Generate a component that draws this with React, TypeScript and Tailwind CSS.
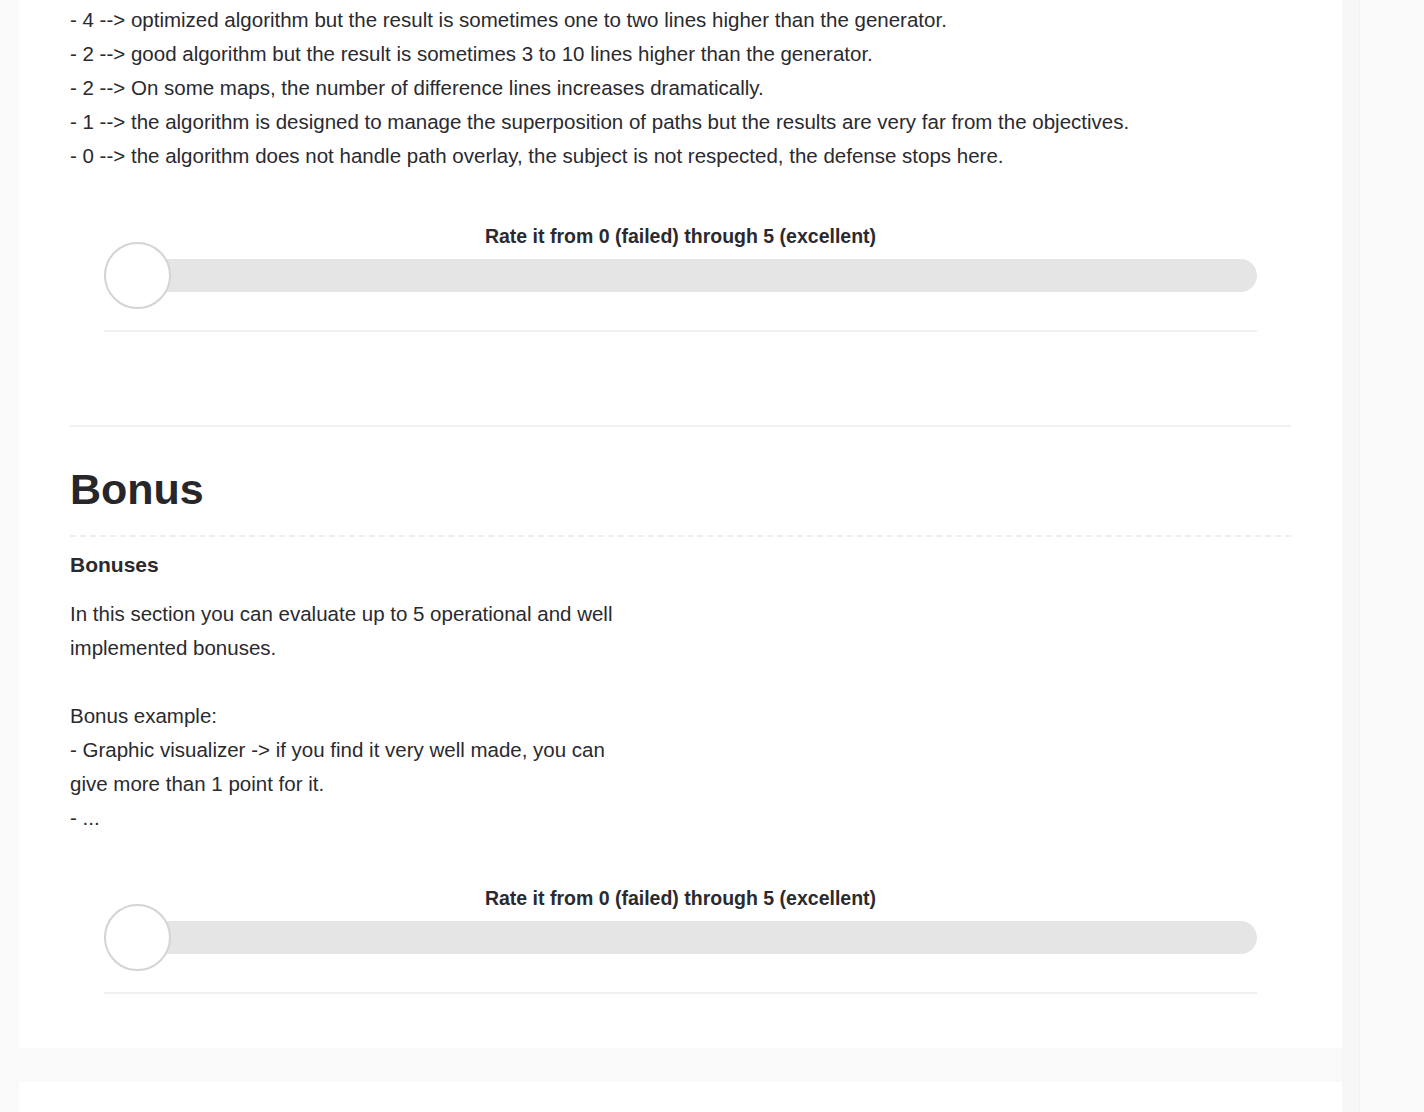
const scale = [
  '- 4 --> optimized algorithm but the result is sometimes one to two lines higher than the generator.',
  '- 2 --> good algorithm but the result is sometimes 3 to 10 lines higher than the generator.',
  '- 2 --> On some maps, the number of difference lines increases dramatically.',
  '- 1 --> the algorithm is designed to manage the superposition of paths but the results are very far from the objectives.',
  '- 0 --> the algorithm does not handle path overlay, the subject is not respected, the defense stops here.',
];

function Rating() {
  return (
    <div className="mx-[34px] pt-[53px]">
      <p className="text-center text-[19.5px] font-bold leading-[20px] text-[#2a2a2f]">
        Rate it from 0 (failed) through 5 (excellent)
      </p>
      <div className="relative mt-[-4px] h-[67px] flex items-center">
        <div className="h-[33px] w-full rounded-full bg-[#e5e5e5]" />
        <div className="absolute left-0 top-0 h-[67px] w-[67px] rounded-full border-2 border-[#d4d4d4] bg-white" />
      </div>
      <div className="mt-[21px] h-[2px] bg-[#f0f0f0]" />
    </div>
  );
}

export default function App() {
  return (
    <div
      className="min-h-screen bg-[#f9f9f9] text-[#2a2a2f] flex"
      style={{ fontFamily: '"Liberation Sans", Arial, sans-serif' }}
    >
      <div className="w-[1342px] pl-[19px] shrink-0">
        <div className="bg-white px-[51px] pt-[3px] pb-[54px]">
          <div className="text-[20.5px] leading-[34px]">
            {scale.map((line) => (
              <div key={line}>{line}</div>
            ))}
          </div>
          <Rating />

          <div className="mt-[93px] h-[2px] bg-[#f0f0f0]" />

          <h2 className="mt-[30px] text-[43px] font-bold leading-[64px] text-[#26262b]">Bonus</h2>
          <div className="mt-[14px] border-t-2 border-dashed border-[#eeeeee]" />

          <h3 className="mt-[14px] text-[21px] font-bold leading-[28px]">Bonuses</h3>
          <div className="mt-[18px] max-w-[575px] text-[20.5px] leading-[34px]">
            <p>In this section you can evaluate up to 5 operational and well implemented bonuses.</p>
            <p className="mt-[34px]">Bonus example:</p>
            <p>- Graphic visualizer -&gt; if you find it very well made, you can give more than 1 point for it.</p>
            <p>- ...</p>
          </div>
          <Rating />
        </div>
        <div className="mt-[34px] h-[40px] bg-white" />
      </div>
      <div className="w-[18px] shrink-0 bg-[#f7f7f7] border-r border-[#f1f1f1]" />
      <div className="flex-1 bg-[#fafafa]" />
    </div>
  );
}
